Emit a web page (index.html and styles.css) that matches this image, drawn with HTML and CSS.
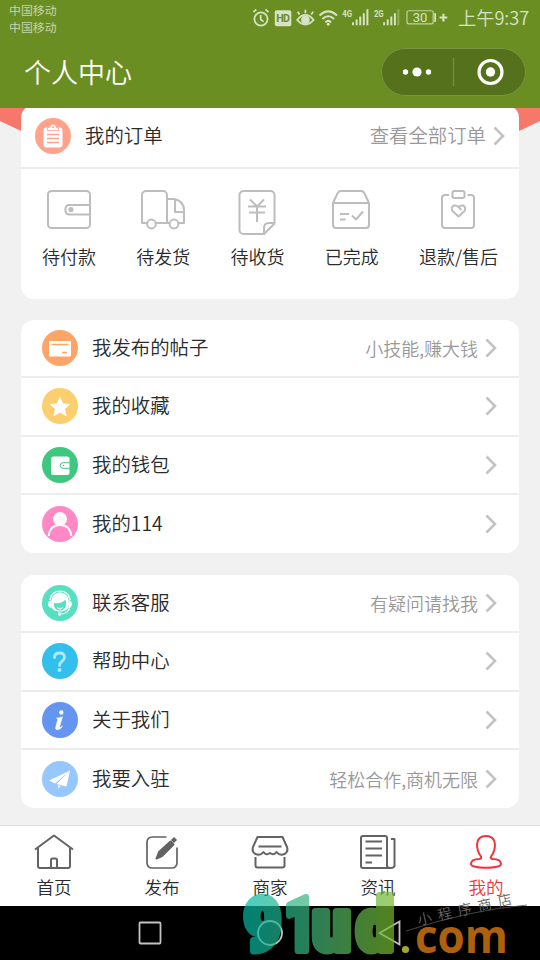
FILE: index.html
```html
<!DOCTYPE html>
<html lang="zh-CN">
<head>
<meta charset="utf-8">
<title>个人中心</title>
<link rel="stylesheet" href="styles.css">
</head>
<body>
<svg class="defs" width="0" height="0">
  <symbol id="chevron" viewBox="0 0 12 20"><path d="M1.500 1.500L10 10L1.500 18.500" fill="none" stroke="#c3c3c7" stroke-width="2.600"/></symbol>
</svg>
<div class="phone">
  <header class="header">
    <div class="status">
      <div class="carriers"><span>中国移动</span><span>中国移动</span></div>
      <svg class="status-icons" width="214" height="22" viewBox="0 0 214 22" fill="none" stroke="#d8e2c5" stroke-width="1.800">
        <circle cx="11.300" cy="12" r="6.800"/><path d="M11 8v4.500l3 2.200M3.500 5l3-2.800M16 2.200l3 2.800"/>
        <rect x="25.500" y="3" width="17" height="16.500" rx="2" fill="#d8e2c5" stroke="none"/>
        <text x="34" y="15.300" class="hd" textLength="14">HD</text>
        <path d="M48.500 13Q57 2.500 65.500 13Q57 22.500 48.500 13ZM57 6V2.500M51 7.500l-2-3M63 7.500l2-3"/><circle cx="57" cy="12.800" r="3.600" fill="#d8e2c5"/>
        <path d="M71.500 8.500Q80.500 0 89.500 8.500M74.500 12Q80.500 6.500 86.500 12M77.500 15.300Q80.500 12.700 83.500 15.300" stroke-width="2.100"/><circle cx="80.500" cy="17.500" r="1.500" fill="#d8e2c5" stroke="none"/>
        <text x="95" y="9.500" class="net" textLength="10" lengthAdjust="spacingAndGlyphs">4G</text>
        <path d="M106 18.500v-3M109.700 18.500v-6M113.400 18.500v-9M117.100 18.500V6M120.800 18.500V2" stroke-width="2"/>
        <text x="127.500" y="9.500" class="net" textLength="10" lengthAdjust="spacingAndGlyphs">2G</text>
        <path d="M138 18.500v-3M141.700 18.500v-6M145.400 18.500v-9M149.100 18.500V6" stroke-width="2"/><path d="M152.600 18.500V2" stroke-width="2" opacity=".35"/>
        <rect x="161.500" y="3.500" width="27" height="13.500" rx="2" stroke-width="1.200" opacity=".8"/>
        <text x="175" y="15.300" class="battery" textLength="15">30</text>
        <path d="M190.500 6v9" stroke-width="1.800"/><path d="M195 10.500h8M199 6.500v8" stroke-width="2.200"/>
      </svg>
      <span class="clock">上午9:37</span>
    </div>
    <div class="titlebar">
      <h1>个人中心</h1>
      <div class="capsule">
        <svg width="145" height="48" viewBox="0 0 145 48">
          <circle cx="24.500" cy="24" r="2.700"/><circle cx="36" cy="24" r="4.600"/><circle cx="47.500" cy="24" r="2.700"/>
          <path d="M72.500 9.500v29" stroke="#72893f" stroke-width="1.500"/>
          <circle cx="109.500" cy="24" r="11.500" fill="none" stroke="#fff" stroke-width="3.200"/><circle cx="109.500" cy="24" r="4.700"/>
        </svg>
      </div>
    </div>
  </header>

  <main class="content">
    <svg class="arc" width="540" height="90" viewBox="0 0 540 90"><path d="M0 0H540V13Q270 148 0 13Z" fill="#f6786a"/></svg>
    <section class="card orders">
      <div class="orders-head">
        <svg class="icon" viewBox="0 0 36 36"><circle cx="18" cy="18" r="18" fill="#ffa28c"/><rect x="8.500" y="9.500" width="19" height="20" rx="3" fill="#fff"/><path d="M12.500 12.500v-3h2.300a3.200 3.200 0 0 1 6.400 0h2.300v3Z" fill="#fff" stroke="#ffa28c" stroke-width=".8"/><circle cx="18" cy="9.300" r="1" fill="#ffa28c"/><path d="M12 16.500h12M12 20.500h12M12 24.500h12" stroke="#ffa28c" stroke-width="1.300"/></svg>
        <span class="label">我的订单</span><span class="value">查看全部订单</span>
        <svg class="chevron"><use href="#chevron"/></svg>
      </div>
      <div class="order-types">
        <div class="order-type"><svg width="48" height="48" viewBox="0 0 48 48"><rect x="3" y="5" width="42" height="37" rx="3.500"/><path d="M45 19H24a3.500 3.500 0 0 0-3.500 3.500v2.500a3.500 3.500 0 0 0 3.500 3.500H45"/><circle cx="26" cy="23.500" r="1.600" fill="#bdbdbd"/></svg><span>待付款</span></div>
        <div class="order-type"><svg width="48" height="48" viewBox="0 0 48 48"><path d="M8 37H3V9a4 4 0 0 1 4-4H24a4 4 0 0 1 4 4V37H17M28 13h7q10 2 10 11V37H39M30 37H28M36 13V26H45"/><circle cx="12.500" cy="38" r="4.400"/><circle cx="35" cy="38" r="4.400"/></svg><span>待发货</span></div>
        <div class="order-type"><svg width="48" height="48" viewBox="0 0 48 48"><path d="M31 48H10.500a4 4 0 0 1-4-4V9a4 4 0 0 1 4-4H37.500a4 4 0 0 1 4 4V37.500ZM31 47V42q0-5 5-5h5.500M17 13.500l7 7 7-7M15 20.500H33M16 26.500H32M24 20.500V36"/></svg><span>待收货</span></div>
        <div class="order-type"><svg width="48" height="48" viewBox="0 0 48 48"><path d="M5 17L9.500 7.500Q10.500 5 13 5H33Q35.500 5 36.500 7.500L41 17V39a3 3 0 0 1-3 3H8a3 3 0 0 1-3-3ZM5 17H41M12 28h9M12 33.500h5.500M24 29.500l4 4 7-8"/></svg><span>已完成</span></div>
        <div class="order-type"><svg width="48" height="48" viewBox="0 0 48 48"><path d="M15 9H11a3 3 0 0 0-3 3V39a3 3 0 0 0 3 3H37a3 3 0 0 0 3-3V12a3 3 0 0 0-3-3H33.500"/><rect x="18.500" y="5" width="12" height="7" rx="2"/><path d="M24.500 30.500l-6-5.500q-2-4 1.500-5.500 2.500-.5 4.500 1.500 2-2 4.500-1.500 3.500 1.500 1.500 5.500ZM24.500 21l3 3"/></svg><span>退款/售后</span></div>
      </div>
    </section>

    <section class="card list">
      <div class="row"><svg class="icon" viewBox="0 0 36 36"><circle cx="18" cy="18" r="18" fill="#ffa469"/><rect x="7" y="11" width="22" height="15.500" rx="1" fill="#fff"/><path d="M9.500 14.500h17M20 22.500h5" stroke="#ffa469" stroke-width="1.300"/></svg><span class="label">我发布的帖子</span><span class="value">小技能,赚大钱</span><svg class="chevron"><use href="#chevron"/></svg></div>
      <div class="row"><svg class="icon" viewBox="0 0 36 36"><circle cx="18" cy="18" r="18" fill="#fccf6e"/><path d="M18 9.500l2.800 6.300 6.700.7-5 4.500 1.500 6.500-6-3.400-6 3.400 1.500-6.500-5-4.500 6.700-.7Z" fill="#fff" stroke="#fff" stroke-linejoin="round"/></svg><span class="label">我的收藏</span><svg class="chevron"><use href="#chevron"/></svg></div>
      <div class="row"><svg class="icon" viewBox="0 0 36 36"><circle cx="18" cy="18" r="18" fill="#3fc77f"/><rect x="9" y="9.500" width="18.500" height="18.500" rx="2.500" fill="#fff"/><path d="M28 15.700h-7a2.800 2.800 0 0 0 0 5.600h7" fill="none" stroke="#3fc77f"/><circle cx="21.500" cy="18.500" r=".8" fill="#3fc77f"/></svg><span class="label">我的钱包</span><svg class="chevron"><use href="#chevron"/></svg></div>
      <div class="row"><svg class="icon" viewBox="0 0 36 36"><circle cx="18" cy="18" r="18" fill="#ff88c5"/><circle cx="18" cy="13" r="7" fill="#f9f9f9"/><path d="M6.700 30q1.200-11 11.300-11t11.300 11" fill="none" stroke="#f9f9f9" stroke-width="2"/></svg><span class="label">我的114</span><svg class="chevron"><use href="#chevron"/></svg></div>
    </section>

    <section class="card list">
      <div class="row"><svg class="icon" viewBox="0 0 36 36"><circle cx="18" cy="18" r="18" fill="#56dfc0"/><path d="M8 15C9 3 27 3 28 15" fill="none" stroke="#fff" stroke-width="1.200"/><path d="M9.500 22V15C10.500 5 25.500 5 26.500 15V22C25 28 11 28 9.500 22Z" fill="#fff"/><path d="M12 18Q20 19 23.500 14.500Q24.500 17 24 21Q22 25.500 18 25.500Q13.500 25.500 12 21Z" fill="#56dfc0"/><path d="M15 22.500Q18 25.500 21 22.500" stroke="#fff" fill="none"/><path d="M9.500 15v8Q6 22 6 19t3.500-4ZM26.500 15v8Q30 22 30 19t-3.500-4Z" fill="#fff"/><path d="M28 21Q27 29 18.500 29" fill="none" stroke="#fff" stroke-width="1.200"/><circle cx="17.500" cy="29" r="1.700" fill="#fff"/></svg><span class="label">联系客服</span><span class="value">有疑问请找我</span><svg class="chevron"><use href="#chevron"/></svg></div>
      <div class="row"><svg class="icon" viewBox="0 0 36 36"><circle cx="18" cy="18" r="18" fill="#32bfec"/><path d="M12.500 14.500q0-4.500 5-4.500t5 4.200c0 4-5 3.800-5 8.300" fill="none" stroke="#aee9fb" stroke-width="2.800" stroke-linecap="round"/><circle cx="17.500" cy="27" r="2" fill="#aee9fb"/></svg><span class="label">帮助中心</span><svg class="chevron"><use href="#chevron"/></svg></div>
      <div class="row"><svg class="icon" viewBox="0 0 36 36"><circle cx="18" cy="18" r="18" fill="#6495f0"/><circle cx="19.300" cy="10.500" r="2.200" fill="#fff"/><path d="M14.500 16.200Q18.500 15.500 20.500 14.800L17.700 24.500Q17.500 26.200 20.800 24.200Q18 28 15 27.800Q13 27.500 13.800 24.700L15.800 17.300Z" fill="#fff" stroke="#fff" stroke-width=".5"/></svg><span class="label">关于我们</span><svg class="chevron"><use href="#chevron"/></svg></div>
      <div class="row"><svg class="icon" viewBox="0 0 36 36"><circle cx="18" cy="18" r="18" fill="#96c7ff"/><path d="M28 9.500L7 19.500L13 22.500ZM28 9.500L14.500 23L24.500 25.500ZM16 24.200l3 .8-3 2.500Z" fill="#fff"/></svg><span class="label">我要入驻</span><span class="value">轻松合作,商机无限</span><svg class="chevron"><use href="#chevron"/></svg></div>
    </section>
  </main>

  <nav class="tabs">
    <div class="tab"><svg width="40" height="40" viewBox="0 0 40 40"><path d="M1 18.500L20 4.500L39 18.500M4 17V35a2 2 0 0 0 2 2H34a2 2 0 0 0 2-2V17M17 37V29a1.500 1.500 0 0 1 1.500-1.500h3A1.500 1.500 0 0 1 23 29V37"/></svg><span>首页</span></div>
    <div class="tab"><svg width="40" height="40" viewBox="0 0 40 40"><path d="M24.500 6H10a5 5 0 0 0-5 5V32a5 5 0 0 0 5 5H30a5 5 0 0 0 5-5V16.500" stroke-width="1.700"/><path d="M14.500 27.500L17 21 28.500 10.500l3 3L20 25Z" fill="#636363"/><path d="M30.500 7.500l3 3" stroke-width="4.500"/></svg><span>发布</span></div>
    <div class="tab"><svg width="40" height="40" viewBox="0 0 40 40"><path d="M7.500 6h25L37 16q1.500 5-2.500 7-5 2-8-2-2.500 4-6.500 1-4 3-6.500-1-3 4-8 2Q1.500 21 3 16ZM8.500 15.500h23M5.500 26v8.500q0 2 2 2h25q2 0 2-2V26"/></svg><span>商家</span></div>
    <div class="tab"><svg width="40" height="40" viewBox="0 0 40 40"><path d="M34 37H5q-2 0-2-2V7q0-2 2-2H27q2 0 2 2V35q0 2 3.500 2t4-2V8H33M7.500 10.500H24M7.500 17.500H24M7.500 24.500H24M7.500 31.500H14"/></svg><span>资讯</span></div>
    <div class="tab active"><svg width="40" height="40" viewBox="0 0 40 40"><path d="M20 5C8 5 10 19 15 25.500q1 2-1.500 2.500C8 28 5 30 5 33c0 5 30 5 30 0 0-3-3-5-8.500-5q-2.500-.5-1.500-2.500C30 19 32 5 20 5Z"/></svg><span>我的</span></div>
  </nav>

  <footer class="system">
    <svg width="540" height="54" viewBox="0 0 540 54" fill="none" stroke="#c2c2c2" stroke-width="1.800"><rect x="139.500" y="16.500" width="21" height="21" rx="1"/><circle cx="270" cy="27" r="12"/><path d="M379.500 27L399.500 15.500V38.500Z"/></svg>
  </footer>

  <svg class="watermark" width="300" height="72" viewBox="240 888 300 72">
    <defs><linearGradient id="brand" gradientUnits="userSpaceOnUse" x1="243" y1="0" x2="393" y2="0"><stop offset="0" stop-color="#00b8a7"/><stop offset=".5" stop-color="#43b477"/><stop offset="1" stop-color="#78b82b"/></linearGradient></defs>
    <g class="brand" opacity=".7" fill="url(#brand)" stroke="url(#brand)">
      <text x="244" y="950" textLength="37" lengthAdjust="spacingAndGlyphs">9</text>
      <text x="284.500" y="950" textLength="31" lengthAdjust="spacingAndGlyphs">1</text>
      <text x="312.500" y="950" textLength="38" lengthAdjust="spacingAndGlyphs">u</text>
      <text x="356.500" y="950" textLength="37" lengthAdjust="spacingAndGlyphs">d</text>
    </g>
    <circle cx="405.500" cy="949.500" r="3.600" fill="#a4a633"/>
    <text class="domain" x="415" y="953" textLength="93" lengthAdjust="spacingAndGlyphs">com</text>
    <g transform="rotate(-13 420 925)"><text class="store" x="419" y="925" textLength="96">小程序商店</text></g>
    <path d="M406 931Q470 910 527 905" fill="none" stroke="#555" stroke-width=".8"/>
  </svg>
</div>
</body>
</html>
```
FILE: styles.css
```css
* { box-sizing: border-box; }

body {
  margin: 0;
  font-family: "Noto Sans CJK SC", sans-serif;
  font-weight: 350;
  color: #2b2b2b;
  background: #f1f1f1;
}

.defs { position: absolute; }
svg { display: block; flex: none; }

.phone {
  position: relative;
  width: 540px;
  height: 960px;
  overflow: hidden;
  display: flex;
  flex-direction: column;
}

.header { height: 108px; flex: none; background: #6b8e23; color: #fff; position: relative; z-index: 1; }
.status { display: flex; height: 37px; padding-left: 9px; color: #d8e2c5; }
.carriers { width: 241px; padding-top: 1px; display: flex; flex-direction: column; font-size: 11.900px; line-height: 17px; font-weight: 400; color: #c6d3a9; }
.status-icons { margin-top: 7px; width: 208px; overflow: visible; }
.clock { font-size: 18.200px; line-height: 35px; white-space: nowrap; }
.status-icons text { stroke: none; fill: #d8e2c5; text-anchor: middle; font-family: Roboto, sans-serif; }
.status-icons .hd { fill: #6b8e23; font-size: 11px; font-weight: 700; }
.status-icons .net { font-size: 9.500px; font-weight: 700; text-anchor: start; }
.status-icons .battery { font-size: 13.500px; font-weight: 400; }

.titlebar { display: flex; justify-content: space-between; padding: 11px 14px 0 24px; }
.titlebar h1 { margin: 0; font-size: 27px; line-height: 48px; font-weight: 350; }
.capsule { width: 145px; height: 48px; border-radius: 24px; background: #55711c; box-shadow: inset 0 0 0 1px #7a9741; }
.capsule svg { fill: #fff; }

.content { position: relative; height: 717px; flex: none; padding: 0 21px; display: flex; flex-direction: column; gap: 22px; }
.arc { position: absolute; left: 0; top: 0; }
.card { position: relative; background: #fff; border-radius: 13px; flex: none; }

.orders { margin-top: -3px; height: 193.500px; margin-bottom: -1px; }
.orders-head { display: flex; align-items: center; height: 64px; padding: 0 14px; border-bottom: 2px solid #ededed; }
.icon { width: 36px; height: 36px; }
.label { font-size: 19.400px; line-height: 28px; margin-left: 14px; position: relative; top: -1px; }
.value { margin-left: auto; color: #999; font-size: 18px; line-height: 28px; }
.chevron { width: 12px; height: 20px; margin-left: auto; }
.value + .chevron { margin-left: 7px; }
.orders-head .value { font-size: 19.400px; position: relative; top: -1px; }

.order-types { display: flex; justify-content: space-between; padding: 17px 21px 0; }
.order-type { display: flex; flex-direction: column; align-items: center; gap: 8px; font-size: 18px; line-height: 28px; }
.order-type svg { fill: none; stroke: #bdbdbd; stroke-width: 2; overflow: visible; stroke-linejoin: round; }

.list { height: 233px; }
.row { display: flex; align-items: center; height: 58.500px; padding: 0 22px 0 21px; border-bottom: 2px solid #ededed; }
.row:last-child { border-bottom: 0; height: 57px; }

.tabs { height: 81px; flex: none; display: flex; background: #fff; border-top: 1px solid #dfdfdf; }
.tab { flex: 1; display: flex; flex-direction: column; align-items: center; padding-top: 5px; font-size: 17.600px; line-height: 26px; gap: 3px; }
.tab svg { fill: none; stroke: #636363; stroke-width: 2; stroke-linejoin: round; }
.tab.active { color: #f0353c; }
.tab.active svg { stroke: #f0353c; }

.system { height: 54px; flex: none; background: #000; }

.watermark { position: absolute; left: 240px; top: 888px; z-index: 2; }
.brand text { font-family: Roboto, sans-serif; font-weight: 900; font-size: 73px; stroke-width: 8px; stroke-linejoin: round; }
.domain { font-family: "Open Sans", sans-serif; font-weight: 700; font-size: 46px; fill: #ad600d; }
.store { font-size: 14px; fill: #686868; }
```
